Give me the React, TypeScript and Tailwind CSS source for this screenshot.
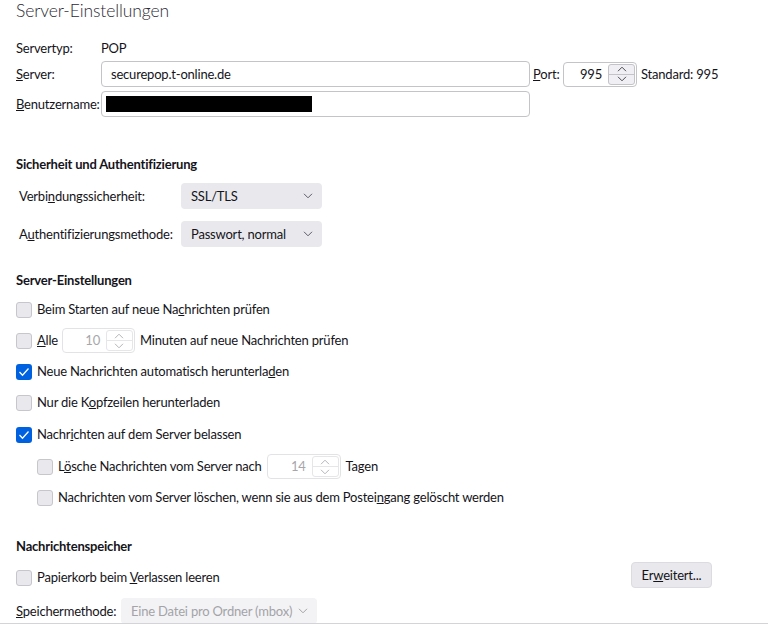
import React from "react";

// Small chevron used by spin buttons and dropdowns
function Chevron({ dir = "down", className = "" }: { dir?: "up" | "down"; className?: string }) {
  return (
    <svg width="10" height="6" viewBox="0 0 10 6" className={className} fill="none" stroke="currentColor" strokeWidth="1">
      {dir === "down" ? <path d="M1 0.8 L5 4.8 L9 0.8" /> : <path d="M1 5.2 L5 1.2 L9 5.2" />}
    </svg>
  );
}

function Checkbox({ checked = false }: { checked?: boolean }) {
  if (checked) {
    return (
      <span className="flex h-[16px] w-[16px] shrink-0 items-center justify-center rounded-[3px] bg-[#0061e0]">
        <svg width="12" height="10" viewBox="0 0 12 10" fill="none" stroke="white" strokeWidth="1.3">
          <path d="M1.5 5 L4.5 8.2 L10.5 1.5" />
        </svg>
      </span>
    );
  }
  return <span className="h-[16px] w-[16px] shrink-0 rounded-[3px] border border-[#c6c6cc] bg-[#e9e9ed]" />;
}

function SpinBox({ value, disabled = false, width = "w-[73px]" }: { value: string; disabled?: boolean; width?: string }) {
  return (
    <div
      className={`flex h-[25px] ${width} items-stretch rounded-[4px] border ${
        disabled ? "border-[#e3e3e6] text-[#a7a7ab]" : "border-[#c3c3c8] text-[#15141a]"
      }`}
    >
      <span className="flex flex-1 items-center justify-end pr-[6px] pt-[1px]">{value}</span>
      <div
        className={`my-[1px] mr-[1px] flex w-[27px] flex-col overflow-hidden rounded-[3px] border ${
          disabled ? "border-[#e6e6e9] text-[#b5b5ba]" : "border-[#c3c3c8] bg-[#f0f0f4] text-[#4a4a52]"
        }`}
      >
        <span className={`flex flex-1 items-center justify-center border-b ${disabled ? "border-[#e6e6e9]" : "border-[#c3c3c8]"}`}>
          <Chevron dir="up" />
        </span>
        <span className="flex flex-1 items-center justify-center">
          <Chevron dir="down" />
        </span>
      </div>
    </div>
  );
}

function Select({ label, width, disabled = false }: { label: string; width: string; disabled?: boolean }) {
  return (
    <div
      className={`flex h-[26px] ${width} items-center justify-between whitespace-nowrap rounded-[4px] pl-[10px] pr-[9px] ${
        disabled ? "bg-[#f3f3f5] text-[#a3a3a8]" : "bg-[#e9e9ed] text-[#15141a]"
      }`}
    >
      <span className="pt-[2px]">{label}</span>
      <Chevron className={disabled ? "text-[#a3a3a8]" : "text-[#5b5b66]"} />
    </div>
  );
}

function CheckRow({
  checked = false,
  indent = false,
  h,
  gap = "gap-[5px]",
  children,
}: {
  checked?: boolean;
  indent?: boolean;
  h: string;
  gap?: string;
  children: React.ReactNode;
}) {
  return (
    <div className={`flex ${h} items-center ${gap} ${indent ? "pl-[21px]" : ""}`}>
      <Checkbox checked={checked} />
      {children}
    </div>
  );
}

export default function App() {
  return (
    <div className="h-[626px] w-[768px] overflow-hidden bg-white font-['Lato','Liberation_Sans',sans-serif] text-[13px] tracking-[-0.2px] text-[#15141a]">
      <div className="h-[624px] overflow-hidden border-b border-[#d4d4d8] pl-4">
        <h1 className="h-[26px] text-[17.5px] font-light leading-[22px] tracking-[-0.1px] text-[#2b2a33]">Server-Einstellungen</h1>

        {/* account basics */}
        <div className="mt-[13px] flex h-[20px] items-center">
          <span className="w-[85px]">Servertyp:</span>
          <span>POP</span>
        </div>
        <div className="mt-[2px] flex h-[26px] items-center">
          <span className="w-[85px] pt-[1px]">
            <u>S</u>erver:
          </span>
          <div className="flex h-[26px] w-[429px] items-center rounded-[4px] border border-[#c3c3c8] pl-[9px] pt-[1px]">
            securepop.t-online.de
          </div>
          <span className="ml-[3px] w-[30px] pt-[1px]">
            <u>P</u>ort:
          </span>
          <SpinBox value="995" width="w-[74px]" />
          <span className="ml-[4px] pt-[1px]">Standard: 995</span>
        </div>
        <div className="mt-[4px] flex h-[26px] items-center">
          <span className="w-[85px] pt-[1px]">
            <u>B</u>enutzername:
          </span>
          <div className="flex h-[26px] w-[429px] items-center rounded-[4px] border border-[#c3c3c8] pl-[4px]">
            <span className="h-[16px] w-[206px] bg-black" />
          </div>
        </div>

        {/* security */}
        <h2 className="mt-[38px] flex h-[20px] items-center font-bold">Sicherheit und Authentifizierung</h2>
        <div className="mt-[8px] flex h-[26px] items-center pl-[3px]">
          <span className="w-[162px] pt-[2px]">
            Verbi<u>n</u>dungssicherheit:
          </span>
          <Select label="SSL/TLS" width="w-[141px]" />
        </div>
        <div className="mt-[12px] flex h-[26px] items-center pl-[3px]">
          <span className="w-[162px] pt-[2px]">
            A<u>u</u>thentifizierungsmethode:
          </span>
          <Select label="Passwort, normal" width="w-[141px]" />
        </div>

        {/* server settings */}
        <h2 className="mt-[24px] flex h-[20px] items-center font-bold">Server-Einstellungen</h2>
        <div className="mt-[3px]">
          <CheckRow h="h-[31px]">
            <span>
              Beim Starten auf neue Na<u>c</u>hrichten prüfen
            </span>
          </CheckRow>
          <CheckRow h="h-[31px]" gap="gap-[4px]">
            <span className="pl-[1px]">
              <u>A</u>lle
            </span>
            <SpinBox value="10" disabled width="w-[73px]" />
            <span className="pl-[1px]">Minuten auf neue Nachrichten prüfen</span>
          </CheckRow>
          <CheckRow checked h="h-[31px]">
            <span>
              Neue Nachrichten automatisch herunterla<u>d</u>en
            </span>
          </CheckRow>
          <CheckRow h="h-[32px]">
            <span>
              Nur die K<u>o</u>pfzeilen herunterladen
            </span>
          </CheckRow>
          <CheckRow checked h="h-[32px]">
            <span>
              Nachr<u>i</u>chten auf dem Server belassen
            </span>
          </CheckRow>
          <CheckRow indent h="h-[31px]">
            <span>
              L<u>ö</u>sche Nachrichten vom Server nach
            </span>
            <SpinBox value="14" disabled width="w-[74px]" />
            <span>Tagen</span>
          </CheckRow>
          <CheckRow indent h="h-[32px]">
            <span>
              Nachrichten vom Server löschen, wenn sie aus dem Postei<u>n</u>gang gelöscht werden
            </span>
          </CheckRow>
        </div>

        {/* message store */}
        <h2 className="mt-[23px] flex h-[20px] items-center font-bold">Nachrichtenspeicher</h2>
        <div className="mt-[5px] flex h-[28px] w-[696px] items-center justify-between">
          <div className="flex items-center gap-[5px] pt-[3px]">
            <Checkbox />
            <span>
              Papierkorb beim <u>V</u>erlassen leeren
            </span>
          </div>
          <button className="mb-[2px] h-[26px] w-[81px] rounded-[4px] border border-[#dcdce0] bg-[#e9e9ed] pt-[1px] text-[#15141a]">
            Er<u>w</u>eitert...
          </button>
        </div>
        <div className="mt-[7px] flex h-[27px] items-center">
          <span className="w-[105px] pt-[2px]">
            <u>S</u>peichermethode:
          </span>
          <Select label="Eine Datei pro Ordner (mbox)" width="w-[196px]" disabled />
        </div>
      </div>
    </div>
  );
}
